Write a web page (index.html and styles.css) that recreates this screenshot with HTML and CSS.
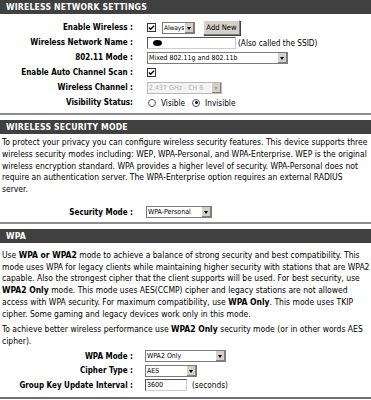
FILE: index.html
```html
<!DOCTYPE html>
<html>
<head>
<meta charset="utf-8">
<link rel="stylesheet" href="styles.css">
</head>
<body>
<div class="hdr">WIRELESS NETWORK SETTINGS</div>
<div class="form first">
  <div class="row">
    <div class="lbl">Enable Wireless :</div>
    <div class="ctl">
      <span class="cb"><svg width="8" height="8" viewBox="0 0 8 8"><path d="M1 3.5 L3 5.5 L7 1.5" fill="none" stroke="#000" stroke-width="1.6"/></svg></span>
      <span class="sel w-always"><span class="val">Always</span><span class="arr"></span></span>
      <span class="btn">Add New</span>
    </div>
  </div>
  <div class="row">
    <div class="lbl">Wireless Network Name :</div>
    <div class="ctl">
      <span class="inp w-name"><span class="blob"></span></span>
      <span class="note">(Also called the SSID)</span>
    </div>
  </div>
  <div class="row">
    <div class="lbl">802.11 Mode :</div>
    <div class="ctl"><span class="sel w-mode"><span class="val">Mixed 802.11g and 802.11b</span><span class="arr"></span></span></div>
  </div>
  <div class="row">
    <div class="lbl">Enable Auto Channel Scan :</div>
    <div class="ctl"><span class="cb"><svg width="8" height="8" viewBox="0 0 8 8"><path d="M1 3.5 L3 5.5 L7 1.5" fill="none" stroke="#000" stroke-width="1.6"/></svg></span></div>
  </div>
  <div class="row">
    <div class="lbl">Wireless Channel :</div>
    <div class="ctl"><span class="sel dis w-chan"><span class="val">2.437 GHz - CH 6</span><span class="arr"></span></span></div>
  </div>
  <div class="row">
    <div class="lbl">Visibility Status:</div>
    <div class="ctl radios">
      <span class="rd"></span><span class="rtxt">Visible</span>
      <span class="rd on"></span><span class="rtxt">Invisible</span>
    </div>
  </div>
</div>
<div class="sep"></div>
<div class="hdr">WIRELESS SECURITY MODE</div>
<p class="txt">To protect your privacy you can configure wireless security features. This device supports three wireless security modes including: WEP, WPA-Personal, and WPA-Enterprise. WEP is the original wireless encryption standard. WPA provides a higher level of security. WPA-Personal does not require an authentication server. The WPA-Enterprise option requires an external RADIUS server.</p>
<div class="form sec">
  <div class="row">
    <div class="lbl">Security Mode :</div>
    <div class="ctl"><span class="sel w-sec"><span class="val">WPA-Personal</span><span class="arr"></span></span></div>
  </div>
</div>
<div class="sep"></div>
<div class="hdr">WPA</div>
<p class="txt t1">Use <b>WPA or WPA2</b> mode to achieve a balance of strong security and best compatibility. This mode uses WPA for legacy clients while maintaining higher security with stations that are WPA2 capable. Also the strongest cipher that the client supports will be used. For best security, use <b>WPA2 Only</b> mode. This mode uses AES(CCMP) cipher and legacy stations are not allowed access with WPA security. For maximum compatibility, use <b>WPA Only</b>. This mode uses TKIP cipher. Some gaming and legacy devices work only in this mode.</p>
<p class="txt t2">To achieve better wireless performance use <b>WPA2 Only</b> security mode (or in other words AES cipher).</p>
<div class="form wpa">
  <div class="row">
    <div class="lbl">WPA Mode :</div>
    <div class="ctl"><span class="sel w-wpa"><span class="val">WPA2 Only</span><span class="arr"></span></span></div>
  </div>
  <div class="row">
    <div class="lbl">Cipher Type :</div>
    <div class="ctl"><span class="sel w-ciph"><span class="val">AES</span><span class="arr"></span></span></div>
  </div>
  <div class="row">
    <div class="lbl">Group Key Update Interval :</div>
    <div class="ctl">
      <span class="inp w-grp"><span class="val">3600</span></span>
      <span class="note">(seconds)</span>
    </div>
  </div>
</div>
<div class="sep bottom"></div>
</body>
</html>
```
FILE: styles.css
```css
html, body { margin: 0; padding: 0; background: #fff; }
body { width: 371px; height: 400px; overflow: hidden; font-family: "DejaVu Sans Condensed", "DejaVu Sans", sans-serif; font-stretch: condensed; color: #000; }

.hdr {
  background: #404040;
  color: #fff;
  font-family: "DejaVu Sans Condensed", "DejaVu Sans", sans-serif;
  font-stretch: condensed;
  font-weight: bold;
  font-size: 8.6px;
  letter-spacing: 0.2px;
  height: 14px;
  line-height: 14px;
  padding-left: 6px;
}

.form { display: flex; flex-direction: column; }
.form.first { padding-top: 6px; padding-bottom: 3px; }
.form.sec { padding-top: 9px; padding-bottom: 2px; }
.form.wpa { padding-top: 1px; padding-bottom: 0; }

.row {
  display: grid;
  grid-template-columns: 133px 1fr;
  column-gap: 14px;
  height: 15px;
  align-items: center;
}
.form.wpa .row { height: 14.5px; column-gap: 12px; }
.form.sec .row { column-gap: 13px; }

.lbl {
  text-align: right;
  font-weight: bold;
  font-size: 8px;
  white-space: nowrap;
}
.ctl { display: flex; align-items: center; font-size: 8.2px; white-space: nowrap; }

.cb {
  width: 9px; height: 9px;
  border: 1px solid #333;
  background: #fff;
  display: flex; align-items: center; justify-content: center;
  box-sizing: border-box;
}

.sel {
  display: flex; align-items: center;
  height: 12px; box-sizing: border-box;
  border: 1px solid #7a7a7a;
  background: #fff;
  font-size: 7px;
}
.sel .val { flex: 1; padding-left: 1px; overflow: hidden; line-height: 10px; }
.sel .arr {
  width: 10px; height: 10px;
  background: #d4d0c8;
  border-left: 1px solid #fff;
  box-sizing: border-box;
  position: relative;
  box-shadow: inset -1px -1px 0 #808080;
}
.sel .arr::after {
  content: "";
  position: absolute;
  left: 2px; top: 4px;
  border-left: 2.5px solid transparent;
  border-right: 2.5px solid transparent;
  border-top: 3px solid #000;
}
.sel.dis { background: #f4f4f4; color: #b0b0b0; border-color: #b8b8b8; }
.sel.dis .arr::after { border-top-color: #a0a0a0; }

.w-always { width: 33px; margin-left: 6px; }
.w-always .val { font-size: 6.6px; letter-spacing: -0.1px; }
.w-mode { width: 141px; }
.w-chan { width: 75px; }
.w-sec { width: 66px; }
.w-wpa { width: 81px; }
.w-ciph { width: 52px; }

.btn {
  margin-left: 8px;
  height: 15px; width: 37px;
  box-sizing: border-box;
  display: flex; align-items: center; justify-content: center;
  background: #d4d0c8;
  border: 1px solid;
  border-color: #fff #808080 #808080 #fff;
  box-shadow: 1px 1px 0 #404040;
  font-size: 7.6px;
}

.inp {
  display: flex; align-items: center;
  height: 12px; box-sizing: border-box;
  border: 1px solid;
  border-color: #555 #ccc #ccc #555;
  background: #fff;
  font-size: 7px;
}
.inp .val { padding-left: 1px; }
.w-name { width: 89px; }
.w-grp { width: 42px; }
.blob { width: 9px; height: 6px; margin-left: 5px; background: #000; border-radius: 50%; }
.note { font-size: 8.2px; margin-left: 2px; }
.w-grp + .note { margin-left: 5px; }

.radios { font-size: 8.2px; }
.rd {
  width: 8px; height: 8px; border-radius: 50%;
  border: 1px solid #555; box-sizing: border-box;
  background: #fff; position: relative;
  margin-left: 1px;
}
.rd.on::after {
  content: ""; position: absolute; left: 1.5px; top: 1.5px;
  width: 3px; height: 3px; border-radius: 50%; background: #000;
}
.rtxt { margin-left: 5px; margin-right: 6px; }

.sep { height: 2px; background: #8c8c8c; margin-bottom: 5px; }
.sep.bottom { background: #707070; margin-top: 5px; }

.txt {
  margin: 0;
  padding: 3px 1px 0 2px;
  font-size: 8.5px;
  line-height: 11.75px;
}
.t1 { padding-top: 7px; }
.t2 { padding-top: 4px; }
```
